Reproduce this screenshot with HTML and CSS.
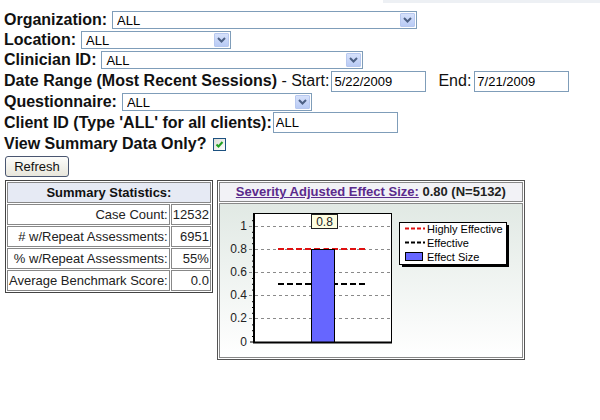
FILE: index.html
```html
<!DOCTYPE html>
<html lang="en">
<head>
  <meta charset="UTF-8">
  <title>Outcomes Summary</title>
  <link rel="stylesheet" href="styles.css">
</head>
<body>
  <div class="top-strip"></div>

  <form class="filters">
    <div class="row">
      <label class="lbl">Organization:</label>
      <span class="select w-org">
        <select><option>ALL</option></select>
        <span class="drop"><svg width="9" height="6" viewBox="0 0 9 6"><path d="M1 1 L4.5 4.5 L8 1" fill="none" stroke="#4d6185" stroke-width="2"/></svg></span>
      </span>
    </div>
    <div class="row">
      <label class="lbl">Location:</label>
      <span class="select w-loc">
        <select><option>ALL</option></select>
        <span class="drop"><svg width="9" height="6" viewBox="0 0 9 6"><path d="M1 1 L4.5 4.5 L8 1" fill="none" stroke="#4d6185" stroke-width="2"/></svg></span>
      </span>
    </div>
    <div class="row">
      <label class="lbl">Clinician ID:</label>
      <span class="select w-clin">
        <select><option>ALL</option></select>
        <span class="drop"><svg width="9" height="6" viewBox="0 0 9 6"><path d="M1 1 L4.5 4.5 L8 1" fill="none" stroke="#4d6185" stroke-width="2"/></svg></span>
      </span>
    </div>
    <div class="row row-date">
      <label class="lbl">Date Range (Most Recent Sessions)</label>
      <span class="plain">&nbsp;- Start:</span>
      <input class="text w-date" type="text" value="5/22/2009">
      <span class="plain end-lbl">End:</span>
      <input class="text w-date end-input" type="text" value="7/21/2009">
    </div>
    <div class="row">
      <label class="lbl">Questionnaire:</label>
      <span class="select w-quest">
        <select><option>ALL</option></select>
        <span class="drop"><svg width="9" height="6" viewBox="0 0 9 6"><path d="M1 1 L4.5 4.5 L8 1" fill="none" stroke="#4d6185" stroke-width="2"/></svg></span>
      </span>
    </div>
    <div class="row row-client">
      <label class="lbl">Client ID (Type 'ALL' for all clients):</label>
      <input class="text w-client" type="text" value="ALL">
    </div>
    <div class="row row-check">
      <label class="lbl">View Summary Data Only?</label>
      <span class="check"><svg width="11" height="11" viewBox="0 0 11 11"><path d="M2.5 5.5 L4.5 7.5 L8.5 3" fill="none" stroke="#21a121" stroke-width="2"/></svg></span>
    </div>
    <div class="row row-btn">
      <button type="button" class="btn">Refresh</button>
    </div>
  </form>

  <div class="results">
    <table class="summary">
      <tr><th colspan="2">Summary Statistics:</th></tr>
      <tr><td class="name">Case Count:</td><td class="num">12532</td></tr>
      <tr><td class="name"># w/Repeat Assessments:</td><td class="num">6951</td></tr>
      <tr><td class="name">% w/Repeat Assessments:</td><td class="num">55%</td></tr>
      <tr><td class="name">Average Benchmark Score:</td><td class="num">0.0</td></tr>
    </table>

    <div class="chart-panel">
      <div class="chart-title"><a href="#">Severity Adjusted Effect Size:</a> 0.80 (N=5132)</div>
      <div class="chart-body">
        <svg class="chart" width="302" height="152" viewBox="0 0 302 152">
          <!-- plot area -->
          <rect x="34.5" y="9.5" width="137" height="129" fill="#fff" stroke="#000" stroke-width="1"/>
          <!-- grid -->
          <g stroke="#8a8a8a" stroke-width="1" stroke-dasharray="3 3">
            <line x1="29" y1="22.5" x2="171" y2="22.5"/>
            <line x1="29" y1="45.5" x2="171" y2="45.5"/>
            <line x1="29" y1="68.5" x2="171" y2="68.5"/>
            <line x1="29" y1="91.5" x2="171" y2="91.5"/>
            <line x1="29" y1="114.5" x2="171" y2="114.5"/>
          </g>
          <!-- minor ticks -->
          <g stroke="#000" stroke-width="1">
            <line x1="32" y1="16.7" x2="34" y2="16.7"/>
            <line x1="32" y1="28.3" x2="34" y2="28.3"/>
            <line x1="32" y1="33.9" x2="34" y2="33.9"/>
            <line x1="32" y1="39.7" x2="34" y2="39.7"/>
            <line x1="32" y1="51.3" x2="34" y2="51.3"/>
            <line x1="32" y1="57.1" x2="34" y2="57.1"/>
            <line x1="32" y1="62.9" x2="34" y2="62.9"/>
            <line x1="32" y1="74.5" x2="34" y2="74.5"/>
            <line x1="32" y1="80.3" x2="34" y2="80.3"/>
            <line x1="32" y1="86.1" x2="34" y2="86.1"/>
            <line x1="32" y1="97.7" x2="34" y2="97.7"/>
            <line x1="32" y1="103.5" x2="34" y2="103.5"/>
            <line x1="32" y1="109.3" x2="34" y2="109.3"/>
            <line x1="32" y1="120.9" x2="34" y2="120.9"/>
            <line x1="32" y1="126.7" x2="34" y2="126.7"/>
            <line x1="32" y1="132.5" x2="34" y2="132.5"/>
            <line x1="30" y1="138" x2="34" y2="138"/>
          </g>
          <!-- benchmarks -->
          <line x1="58" y1="45" x2="145" y2="45" stroke="#e01010" stroke-width="2" stroke-dasharray="6 3"/>
          <line x1="58" y1="80" x2="145" y2="80" stroke="#000" stroke-width="2" stroke-dasharray="6 3"/>
          <!-- bar -->
          <rect x="91.5" y="45.5" width="23" height="93" fill="#6666ff" stroke="#000" stroke-width="1"/>
          <line x1="103" y1="24" x2="103" y2="45" stroke="#fff" stroke-width="1"/>
          <!-- axes -->
          <line x1="34" y1="9" x2="34" y2="139" stroke="#000" stroke-width="2"/>
          <line x1="33" y1="138.5" x2="172" y2="138.5" stroke="#000" stroke-width="2"/>
          <!-- y labels -->
          <g class="axis-label" text-anchor="end">
            <text x="27" y="26">1</text>
            <text x="27" y="49">0.8</text>
            <text x="27" y="72">0.6</text>
            <text x="27" y="95">0.4</text>
            <text x="27" y="118">0.2</text>
            <text x="27" y="142">0</text>
          </g>
          <!-- value label -->
          <rect x="91.5" y="10.5" width="26" height="14" fill="#ffffe1" stroke="#222" stroke-width="1"/>
          <text class="axis-label" x="104.5" y="22" text-anchor="middle">0.8</text>
          <!-- legend -->
          <rect x="182" y="21" width="107" height="42" fill="#000"/>
          <rect x="179.5" y="18.5" width="107" height="42" fill="#fff" stroke="#000" stroke-width="1"/>
          <line x1="185" y1="24.5" x2="205" y2="24.5" stroke="#e01010" stroke-width="2" stroke-dasharray="4 2"/>
          <line x1="185" y1="38.5" x2="205" y2="38.5" stroke="#000" stroke-width="2" stroke-dasharray="4 2"/>
          <rect x="185.5" y="48.5" width="17" height="8" fill="#6666ff" stroke="#000" stroke-width="1"/>
          <g class="legend-label">
            <text x="207" y="28.5">Highly Effective</text>
            <text x="207" y="42.5">Effective</text>
            <text x="207" y="56.5">Effect Size</text>
          </g>
        </svg>
      </div>
    </div>
  </div>
</body>
</html>
```

FILE: styles.css
```css
body {
  margin: 0;
  padding: 0 0 0 4px;
  font-family: "Liberation Sans", Arial, sans-serif;
  color: #111;
  background-color: #fff;
}

.top-strip {
  height: 3px;
  margin-left: 379px;
  background-color: #edf0f4;
}

.filters {
  margin: 7px 0 0 0;
}

.row {
  display: flex;
  align-items: center;
  height: 20px;
}

.row-date {
  height: 22px;
}

.row-client {
  height: 21px;
}

.row-check {
  height: 22px;
}

.row-btn {
  height: 23px;
}

.lbl {
  font-size: 16px;
  font-weight: bold;
  white-space: pre;
}

.plain {
  font-size: 16px;
  white-space: pre;
}

.end-lbl {
  margin-left: 12px;
}

/* xp style dropdown */
.select {
  display: inline-flex;
  align-items: stretch;
  height: 18px;
  margin-left: 5px;
  border: 1px solid #7f9db9;
  box-sizing: border-box;
  background-color: #fff;
}

.select select {
  flex: 1;
  appearance: none;
  -webkit-appearance: none;
  border: none;
  outline: none;
  background: transparent;
  font-family: "Liberation Sans", Arial, sans-serif;
  font-size: 13px;
  color: #000;
  padding: 0 0 0 4px;
  margin: 0;
}

.drop {
  width: 15px;
  margin: 1px;
  display: flex;
  align-items: center;
  justify-content: center;
  border: 1px solid #b7c8ef;
  border-radius: 1px;
  box-sizing: border-box;
  background: linear-gradient(#d6e1fb, #b9cbf5);
}

.w-org { width: 305px; }
.w-loc { width: 150px; }
.w-clin { width: 262px; }
.w-quest { width: 190px; }

.text {
  height: 21px;
  box-sizing: border-box;
  border: 1px solid #7f9db9;
  font-family: "Liberation Sans", Arial, sans-serif;
  font-size: 13px;
  color: #000;
  padding: 0 2px;
  margin: 0 0 0 2px;
  outline: none;
}

.w-date { width: 95px; }
.end-input { margin-left: 3px; }
.w-client { width: 125px; margin-left: 1px; }

.check {
  width: 13px;
  height: 13px;
  margin-left: 7px;
  box-sizing: border-box;
  border: 1px solid #1c5180;
  background: linear-gradient(135deg, #dcdcd6, #ffffff);
  display: flex;
  align-items: center;
  justify-content: center;
}

.btn {
  width: 64px;
  height: 21px;
  margin-left: 1px;
  padding: 0;
  font-family: "Liberation Sans", Arial, sans-serif;
  font-size: 13px;
  color: #111;
  border: 1px solid #4a5670;
  border-radius: 3px;
  background: linear-gradient(#fdfdfb, #e8e6dc);
}

.results {
  display: flex;
  align-items: flex-start;
  gap: 4px;
  margin-top: 2px;
  margin-left: 1px;
}

.summary {
  border: 1px solid #444;
  border-collapse: separate;
  border-spacing: 1px;
  font-size: 13px;
}

.summary th {
  height: 21px;
  padding: 0;
  box-sizing: border-box;
  border: 1px solid #888;
  background-color: #e6eaf4;
  font-weight: bold;
  color: #111;
}

.summary td {
  height: 21px;
  padding: 0 1px;
  box-sizing: border-box;
  border: 1px solid #888;
  text-align: right;
  color: #222;
  white-space: nowrap;
}

.chart-panel {
  width: 308px;
  box-sizing: border-box;
  border: 1px solid #555;
  padding: 1px;
  display: flex;
  flex-direction: column;
  gap: 1px;
}

.chart-title {
  height: 20px;
  box-sizing: border-box;
  border: 1px solid #888;
  background-color: #f2f2f6;
  font-size: 13px;
  font-weight: bold;
  color: #222;
  text-align: center;
  line-height: 18px;
}

.chart-title a {
  color: #5b2a8c;
  text-decoration: underline;
}

.chart-body {
  border: 1px solid #888;
  background: linear-gradient(#e1e9e4, #ffffff);
  height: 153px;
}

.chart {
  display: block;
}

.axis-label {
  font-family: "Liberation Sans", Arial, sans-serif;
  font-size: 12px;
  fill: #222;
}

.legend-label {
  font-family: "Liberation Sans", Arial, sans-serif;
  font-size: 11px;
  fill: #000;
}
```
